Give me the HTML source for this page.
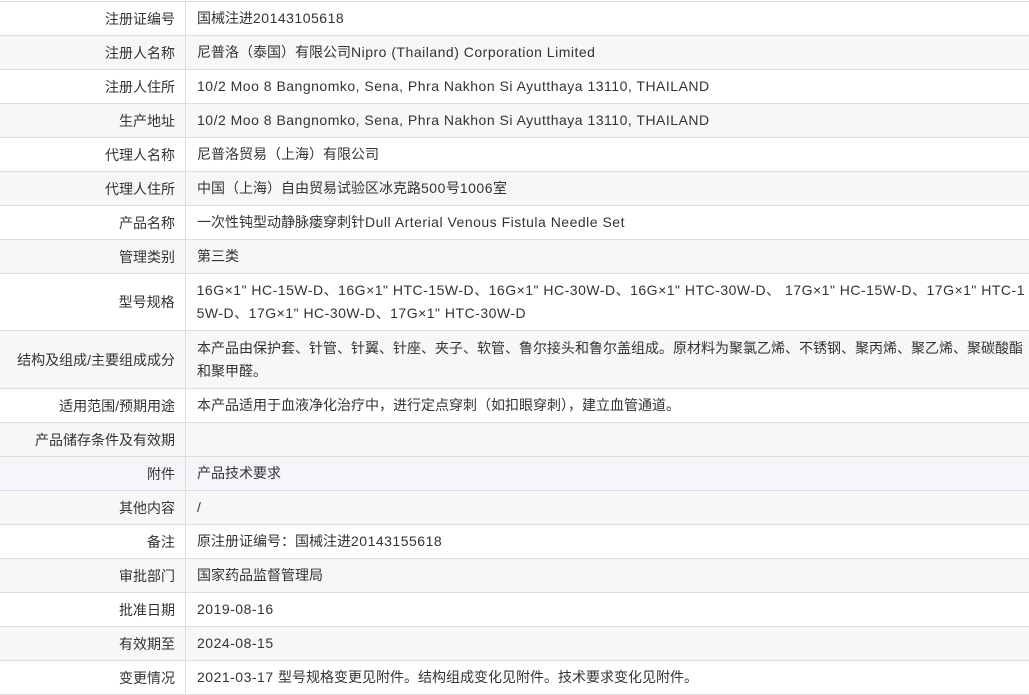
<!DOCTYPE html>
<html><head><meta charset="utf-8"><style>
body{margin:0;width:1029px;height:695px;overflow:hidden;background:#fff;font-family:"Liberation Sans","Noto Sans CJK SC",sans-serif;font-size:14px;color:#333}
.r{position:absolute;left:0;width:1029px;border-top:1px solid #ddd;box-sizing:border-box;display:flex}
.g{background:#f7f7f7}
.l{width:186px;border-right:1px solid #ddd;box-sizing:border-box;text-align:right;padding-right:10px;display:flex;align-items:center;justify-content:flex-end}
.v{padding-left:11px;padding-right:4px;display:flex;align-items:center;line-height:23px;flex:1;white-space:nowrap}
.e{letter-spacing:0.5px}
</style></head><body>
<div class="r" style="top:1px;height:34px"><div class="l">注册证编号</div><div class="v"><span>国械注进<span class="e">20143105618</span></span></div></div>
<div class="r g" style="top:35px;height:34px"><div class="l">注册人名称</div><div class="v"><span>尼普洛（泰国）有限公司<span class="e">Nipro (Thailand) Corporation Limited</span></span></div></div>
<div class="r" style="top:69px;height:34px"><div class="l">注册人住所</div><div class="v e">10/2 Moo 8 Bangnomko, Sena, Phra Nakhon Si Ayutthaya 13110, THAILAND</div></div>
<div class="r g" style="top:103px;height:34px"><div class="l">生产地址</div><div class="v e">10/2 Moo 8 Bangnomko, Sena, Phra Nakhon Si Ayutthaya 13110, THAILAND</div></div>
<div class="r" style="top:137px;height:34px"><div class="l">代理人名称</div><div class="v">尼普洛贸易（上海）有限公司</div></div>
<div class="r g" style="top:171px;height:34px"><div class="l">代理人住所</div><div class="v"><span>中国（上海）自由贸易试验区冰克路<span class="e">500</span>号<span class="e">1006</span>室</span></div></div>
<div class="r" style="top:205px;height:34px"><div class="l">产品名称</div><div class="v"><span>一次性钝型动静脉瘘穿刺针<span class="e">Dull Arterial Venous Fistula Needle Set</span></span></div></div>
<div class="r g" style="top:239px;height:34px"><div class="l">管理类别</div><div class="v">第三类</div></div>
<div class="r" style="top:273px;height:57px"><div class="l">型号规格</div><div class="v"><span class="e">16G×1" HC-15W-D、16G×1" HTC-15W-D、16G×1" HC-30W-D、16G×1" HTC-30W-D、 17G×1" HC-15W-D、17G×1" HTC-1<br>5W-D、17G×1" HC-30W-D、17G×1" HTC-30W-D</span></div></div>
<div class="r g" style="top:330px;height:58px"><div class="l">结构及组成/主要组成成分</div><div class="v"><span>本产品由保护套、针管、针翼、针座、夹子、软管、鲁尔接头和鲁尔盖组成。原材料为聚氯乙烯、不锈钢、聚丙烯、聚乙烯、聚碳酸酯<br>和聚甲醛。</span></div></div>
<div class="r" style="top:388px;height:34px"><div class="l">适用范围/预期用途</div><div class="v">本产品适用于血液净化治疗中，进行定点穿刺（如扣眼穿刺），建立血管通道。</div></div>
<div class="r g" style="top:422px;height:34px"><div class="l">产品储存条件及有效期</div><div class="v"></div></div>
<div class="r" style="top:456px;height:34px;background:#f5f6f9"><div class="l">附件</div><div class="v">产品技术要求</div></div>
<div class="r g" style="top:490px;height:34px"><div class="l">其他内容</div><div class="v">/</div></div>
<div class="r" style="top:524px;height:34px"><div class="l">备注</div><div class="v"><span>原注册证编号：国械注进<span class="e">20143155618</span></span></div></div>
<div class="r g" style="top:558px;height:34px"><div class="l">审批部门</div><div class="v">国家药品监督管理局</div></div>
<div class="r" style="top:592px;height:34px"><div class="l">批准日期</div><div class="v e">2019-08-16</div></div>
<div class="r g" style="top:626px;height:34px"><div class="l">有效期至</div><div class="v e">2024-08-15</div></div>
<div class="r" style="top:660px;height:35px;border-bottom:1px solid #ddd"><div class="l">变更情况</div><div class="v"><span><span class="e">2021-03-17 </span>型号规格变更见附件。结构组成变化见附件。技术要求变化见附件。</span></div></div>
</body></html>
